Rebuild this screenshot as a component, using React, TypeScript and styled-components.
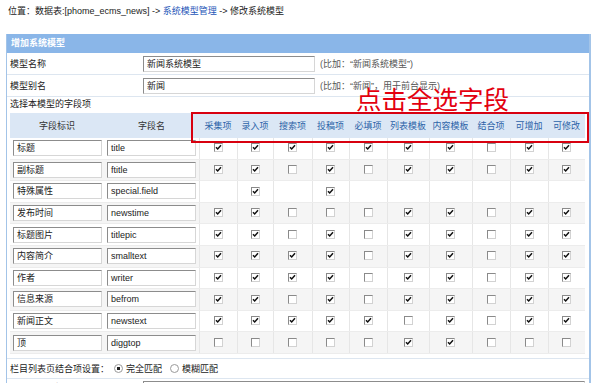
import React from 'react'
import styled, { createGlobalStyle } from 'styled-components'

const GlobalStyle = createGlobalStyle`
  html, body {
    margin: 0;
    padding: 0;
    background: #fff;
  }
  body {
    font-family: "Liberation Sans", "Noto Sans CJK SC", sans-serif;
    font-size: 9px;
    color: #222;
  }
`

const Page = styled.div`
  position: relative;
  width: 600px;
  height: 383px;
  overflow: hidden;
`

const Crumb = styled.div`
  height: 22px;
  line-height: 22px;
  padding-left: 8px;
  margin-bottom: 12px;
  color: #222;
`

const CrumbLink = styled.span`
  color: #1d56b8;
`

const Panel = styled.div`
  margin-left: 6px;
  width: 582px;
  border: 1px solid #a3c4e8;
  border-top: none;
  border-right-width: 2px;
`

const PanelHeader = styled.div`
  height: 19px;
  line-height: 19px;
  padding-left: 4px;
  background: #8ab6e8;
  color: #fff;
  font-weight: bold;
`

const FormRow = styled.div`
  display: grid;
  grid-template-columns: 136px 1fr;
  align-items: center;
  height: 21px;
  border-bottom: 1px solid #dde6f0;
`

const Label = styled.div`
  padding-left: 3px;
`

const Field = styled.div`
  display: flex;
  align-items: center;
  gap: 5px;
`

const TextBox = styled.div<{ $w: number }>`
  box-sizing: border-box;
  width: ${p => p.$w}px;
  height: 16px;
  line-height: 14px;
  padding-left: 3px;
  border: 1px solid;
  border-color: #8c8c8c #d6d6d6 #d6d6d6 #8c8c8c;
  background: #fff;
  color: #222;
  white-space: nowrap;
  overflow: hidden;
`

const Hint = styled.span`
  color: #555;
`

const FieldSection = styled.div`
  padding: 0 0 4px 3px;
  border-bottom: 1px solid #dde6f0;
`

const Caption = styled.div`
  height: 15px;
  line-height: 14px;
  margin-bottom: 1px;
`

const Grid = styled.table`
  border-collapse: collapse;
  table-layout: fixed;
  width: 575px;
`

const HeadCell = styled.th<{ $link?: boolean }>`
  height: 25px;
  padding: 0;
  background: #dbe7f5;
  font-weight: normal;
  text-align: center;
  color: ${p => (p.$link ? '#2c63a8' : '#333')};
`

const Row = styled.tr<{ $alt: boolean }>`
  background: ${p => (p.$alt ? '#f5f5f5' : '#fff')};
`

const NameCell = styled.td`
  height: 20.6px;
  padding: 0 0 0 3px;
  border-bottom: 1px solid #ececec;
`

const CheckCell = styled.td`
  height: 20.6px;
  padding: 0;
  text-align: center;
  border-left: 1px solid #e6e6e6;
  border-bottom: 1px solid #ececec;
`

const Box = styled.span`
  display: inline-block;
  box-sizing: border-box;
  width: 9px;
  height: 9px;
  border: 1px solid;
  border-color: #8a8a8a #d2d2d2 #d2d2d2 #8a8a8a;
  background: #fff;
  vertical-align: middle;
  position: relative;
  top: -1px;

  svg {
    display: block;
  }
`

const OptionRow = styled.div`
  display: flex;
  align-items: center;
  height: 19px;
  padding-left: 3px;
  border-bottom: 1px solid #dde6f0;
`

const RadioLabel = styled.label`
  display: flex;
  align-items: center;
  gap: 3px;
  margin-left: 5px;

  & + & {
    margin-left: 8px;
  }
`

const Radio = styled.span<{ $on: boolean }>`
  display: inline-block;
  box-sizing: border-box;
  width: 9px;
  height: 9px;
  border-radius: 50%;
  border: 1px solid #9a9a9a;
  background: ${p => (p.$on ? 'radial-gradient(circle, #222 0 1.6px, #fff 2px)' : '#fff')};
`

const LastRow = styled.div`
  display: grid;
  grid-template-columns: 136px 1fr;
  padding-top: 2px;
`

const Note = styled.div`
  position: absolute;
  left: 356px;
  top: 85px;
  font-family: "Noto Sans CJK SC", sans-serif;
  font-size: 25.5px;
  line-height: 1;
  color: #e3000f;
`

const Frame = styled.div`
  position: absolute;
  left: 191px;
  top: 112px;
  width: 398px;
  height: 31px;
  box-sizing: border-box;
  border: 2px solid #d8000f;
`

const heads = ['采集项', '录入项', '搜索项', '投稿项', '必填项', '列表模板', '内容模板', '结合项', '可增加', '可修改']
const widths = [94, 95, 38, 36, 39, 37, 38, 42, 43, 38, 38, 37]

const fields: [string, string, string][] = [
  ['标题', 'title', '1111111011'],
  ['副标题', 'ftitle', '1101011011'],
  ['特殊属性', 'special.field', '-1-1------'],
  ['发布时间', 'newstime', '1100011011'],
  ['标题图片', 'titlepic', '1101011011'],
  ['内容简介', 'smalltext', '1111011011'],
  ['作者', 'writer', '1111011011'],
  ['信息来源', 'befrom', '1101011011'],
  ['新闻正文', 'newstext', '1111101011'],
  ['顶', 'diggtop', '0000011000'],
]

function Check({ on }: { on: boolean }) {
  return (
    <Box>
      {on && (
        <svg width="7" height="7" viewBox="0 0 7 7">
          <path d="M1 3.2 L2.7 5 L6 1.3" fill="none" stroke="#111" strokeWidth="1.5" />
        </svg>
      )}
    </Box>
  )
}

export default function App() {
  return (
    <Page>
      <GlobalStyle />
      <Crumb>
        位置：数据表:[phome_ecms_news] -&gt; <CrumbLink>系统模型管理</CrumbLink> -&gt; 修改系统模型
      </Crumb>
      <Panel>
        <PanelHeader>增加系统模型</PanelHeader>
        <FormRow>
          <Label>模型名称</Label>
          <Field>
            <TextBox $w={172}>新闻系统模型</TextBox>
            <Hint>(比加：“新闻系统模型”)</Hint>
          </Field>
        </FormRow>
        <FormRow>
          <Label>模型别名</Label>
          <Field>
            <TextBox $w={172}>新闻</TextBox>
            <Hint>(比加：“新闻”，用于前台显示)</Hint>
          </Field>
        </FormRow>
        <FieldSection>
          <Caption>选择本模型的字段项</Caption>
          <Grid>
            <colgroup>
              {widths.map((w, i) => (
                <col key={i} style={{ width: w }} />
              ))}
            </colgroup>
            <thead>
              <tr>
                <HeadCell>字段标识</HeadCell>
                <HeadCell>字段名</HeadCell>
                {heads.map(h => (
                  <HeadCell key={h} $link>
                    {h}
                  </HeadCell>
                ))}
              </tr>
            </thead>
            <tbody>
              {fields.map(([title, name, flags], i) => (
                <Row key={name} $alt={i % 2 === 1}>
                  <NameCell>
                    <TextBox $w={89}>{title}</TextBox>
                  </NameCell>
                  <NameCell>
                    <TextBox $w={89}>{name}</TextBox>
                  </NameCell>
                  {flags.split('').map((f, j) => (
                    <CheckCell key={j}>{f !== '-' && <Check on={f === '1'} />}</CheckCell>
                  ))}
                </Row>
              ))}
            </tbody>
          </Grid>
        </FieldSection>
        <OptionRow>
          栏目列表页结合项设置：
          <RadioLabel>
            <Radio $on={true} />
            完全匹配
          </RadioLabel>
          <RadioLabel>
            <Radio $on={false} />
            模糊匹配
          </RadioLabel>
        </OptionRow>
        <LastRow>
          <Label>录入表单模板</Label>
          <TextBox $w={442}>&nbsp;</TextBox>
        </LastRow>
      </Panel>
      <Note>点击全选字段</Note>
      <Frame />
    </Page>
  )
}
